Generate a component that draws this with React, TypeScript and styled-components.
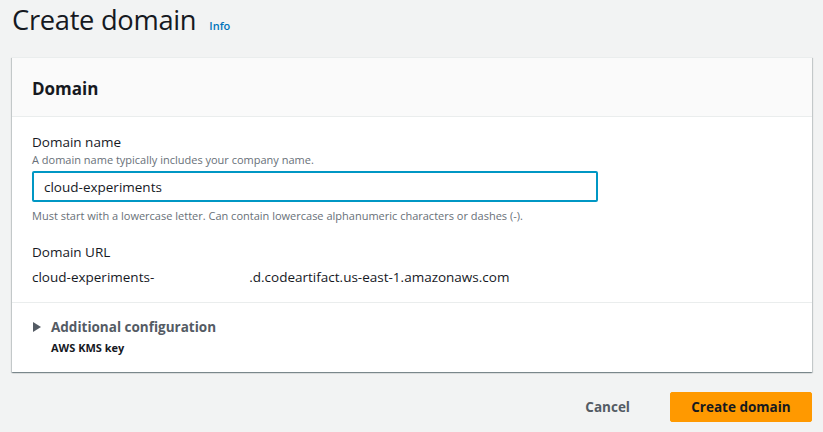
import React from "react";
import styled, { createGlobalStyle } from "styled-components";

const Global = createGlobalStyle`
  html, body { margin: 0; padding: 0; background: #f2f3f3; }
  body { font-family: "Open Sans", "Noto Sans", sans-serif; color: #16191f; -webkit-font-smoothing: antialiased; }
  * { box-sizing: border-box; }
`;

const Page = styled.div`
  width: 823px;
  height: 432px;
  padding: 0 11px 0 12px;
  overflow: hidden;
`;

const TitleRow = styled.div`
  display: flex;
  align-items: baseline;
  gap: 13px;
  height: 57px;
  padding-top: 1px;
`;

const Title = styled.h1`
  margin: 0;
  font-size: 27.3px;
  font-weight: 400;
  line-height: 38px;
  letter-spacing: -0.3px;
  color: #16191f;
`;

const InfoLink = styled.a`
  font-size: 11px;
  font-weight: 600;
  color: #0073bb;
  text-decoration: none;
`;

const Card = styled.section`
  background: #fff;
  box-shadow: 0 1px 1px 0 rgba(0, 28, 36, 0.3), 1px 1px 1px 0 rgba(0, 28, 36, 0.15),
    -1px 1px 1px 0 rgba(0, 28, 36, 0.15);
  border-top: 1px solid #eaeded;
`;

const CardHeader = styled.header`
  background: #fafafa;
  border-bottom: 1px solid #eaeded;
  height: 59px;
  padding: 0 20px;
  display: flex;
  align-items: center;
`;

const CardTitle = styled.h2`
  margin: 0;
  font-size: 17px;
  font-weight: 700;
  color: #16191f;
  padding-top: 2px;
`;

const Section = styled.div<{ $bordered?: boolean }>`
  padding: ${(p) => (p.$bordered ? "14px 20px 0 20px" : "15px 20px 0 20px")};
  border-top: ${(p) => (p.$bordered ? "1px solid #eaeded" : "none")};
`;

const Field = styled.div<{ $gap?: number }>`
  display: flex;
  flex-direction: column;
  margin-bottom: ${(p) => p.$gap ?? 0}px;
`;

const Label = styled.div`
  font-size: 13.5px;
  line-height: 20px;
  color: #16191f;
`;

const Description = styled.div`
  font-size: 11px;
  line-height: 16px;
  color: #687078;
`;

const Constraint = styled.div`
  font-size: 11px;
  line-height: 16px;
  color: #687078;
  margin-top: 6px;
`;

const Input = styled.input`
  width: 566px;
  height: 31px;
  margin-top: 3px;
  border: 2px solid #0097c4;
  border-radius: 2px;
  padding: 0 10px;
  font-family: inherit;
  font-size: 13.5px;
  color: #16191f;
  outline: none;
`;

const Value = styled.div`
  font-size: 13.5px;
  line-height: 20px;
  color: #16191f;
  margin-top: 5px;
  white-space: nowrap;
`;

const Redacted = styled.span`
  display: inline-block;
  width: 95px;
`;

const ExpanderHead = styled.div`
  display: flex;
  align-items: center;
  gap: 10px;
  height: 20px;
  margin-left: 1px;
`;

const Caret = styled.svg`
  width: 8px;
  height: 10px;
  fill: #545b64;
`;

const ExpanderTitle = styled.span`
  font-size: 13.5px;
  font-weight: 700;
  color: #545b64;
`;

const ExpanderSub = styled.div`
  font-size: 11px;
  font-weight: 700;
  color: #16191f;
  line-height: 16px;
  margin: 3px 0 0 19px;
  padding-bottom: 16px;
`;

const Actions = styled.div`
  display: flex;
  justify-content: flex-end;
  align-items: center;
  gap: 20px;
  margin-top: 20px;
`;

const LinkButton = styled.button`
  background: none;
  border: none;
  font-family: inherit;
  font-size: 13.5px;
  font-weight: 700;
  color: #545b64;
  padding: 0 20px;
  height: 30px;
`;

const PrimaryButton = styled.button`
  background: #ff9900;
  border: 1px solid #ff9900;
  border-radius: 2px;
  font-family: inherit;
  font-size: 13.5px;
  font-weight: 700;
  color: #16191f;
  width: 142px;
  height: 30px;
  padding: 0;
`;

export default function App() {
  return (
    <Page>
      <Global />
      <TitleRow>
        <Title>Create domain</Title>
        <InfoLink href="#">Info</InfoLink>
      </TitleRow>
      <Card>
        <CardHeader>
          <CardTitle>Domain</CardTitle>
        </CardHeader>
        <Section>
          <Field $gap={18}>
            <Label>Domain name</Label>
            <Description>A domain name typically includes your company name.</Description>
            <Input defaultValue="cloud-experiments" />
            <Constraint>
              Must start with a lowercase letter. Can contain lowercase alphanumeric characters or dashes (-).
            </Constraint>
          </Field>
          <Field $gap={15}>
            <Label>Domain URL</Label>
            <Value>
              cloud-experiments-<Redacted />.d.codeartifact.us-east-1.amazonaws.com
            </Value>
          </Field>
        </Section>
        <Section $bordered>
          <ExpanderHead>
            <Caret viewBox="0 0 8 10">
              <path d="M0 0 L8 5 L0 10 Z" />
            </Caret>
            <ExpanderTitle>Additional configuration</ExpanderTitle>
          </ExpanderHead>
          <ExpanderSub>AWS KMS key</ExpanderSub>
        </Section>
      </Card>
      <Actions>
        <LinkButton>Cancel</LinkButton>
        <PrimaryButton>Create domain</PrimaryButton>
      </Actions>
    </Page>
  );
}
